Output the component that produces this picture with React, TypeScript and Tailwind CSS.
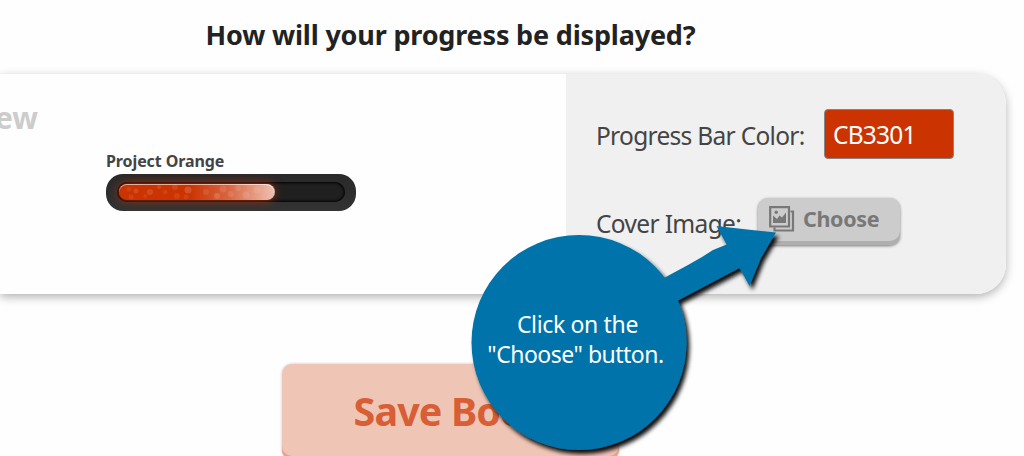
import React from 'react';

const PROGRESS = 69;

const BOKEH: { x: number; y: number; r: number; o: number }[] = [
  { x: 10, y: 5, r: 2.5, o: 0.07 },
  { x: 17, y: 7, r: 2.5, o: 0.12 },
  { x: 12, y: 13, r: 2.5, o: 0.08 },
  { x: 31, y: 8, r: 3, o: 0.12 },
  { x: 26, y: 12, r: 2, o: 0.08 },
  { x: 40, y: 3, r: 2, o: 0.12 },
  { x: 46, y: 8, r: 2.5, o: 0.07 },
  { x: 56, y: 3, r: 3, o: 0.1 },
  { x: 58, y: 12, r: 3, o: 0.08 },
  { x: 69, y: 6, r: 3.5, o: 0.16 },
  { x: 67, y: 13, r: 2.5, o: 0.08 },
  { x: 87, y: 8, r: 3, o: 0.09 },
  { x: 98, y: 12, r: 3, o: 0.14 },
  { x: 104, y: 5, r: 3.5, o: 0.1 },
  { x: 112, y: 10, r: 3, o: 0.1 },
  { x: 119, y: 4, r: 3, o: 0.09 },
  { x: 127, y: 11, r: 3.5, o: 0.1 },
  { x: 138, y: 6, r: 3.5, o: 0.09 },
];

const GalleryIcon: React.FC = () => (
  <svg width="26" height="26" viewBox="0 0 26 26" fill="none" className="shrink-0">
    <path d="M1.200 1.200h18.800v19.300h-18.800z" stroke="#787878" strokeWidth="2.200" />
    <path d="M21.500 5.500h2.500v19h-18.500v-3" stroke="#787878" strokeWidth="2.200" />
    <circle cx="7.200" cy="6.300" r="1.700" fill="#787878" />
    <path d="M4 9.500l4 3.500 2.500-3.500 2.500 2 4-5v10.500h-13z" fill="#787878" />
  </svg>
);

const ProgressBar: React.FC<{ title: string; percent: number }> = ({ title, percent }) => (
  <div className="w-[250px]">
    <p className="h-[25px] text-[16px] leading-[24px] font-bold tracking-[-0.1px] text-[#444]">{title}</p>
    <div className="h-[37px] rounded-[17px] bg-linear-to-b from-[#292929] to-[#333] px-[11px] py-[8px]">
      <div className="h-[20px] rounded-full bg-[#202020] p-[2px] shadow-[inset_0_0_3px_1px_#000]">
        <div
          className="relative h-[16px] overflow-visible rounded-full bg-[#cb3301] shadow-[0_0_10px_1px_#cb3301b0]"
          style={{ width: `${percent}%` }}
        >
          <svg width="156" height="16" viewBox="0 0 156 16" className="block rounded-full">
            <defs>
              <linearGradient id="shine">
                <stop offset="0.45" stopColor="#fff" stopOpacity="0" />
                <stop offset="0.7" stopColor="#fff" stopOpacity="0.25" />
                <stop offset="1" stopColor="#fff" stopOpacity="0.7" />
              </linearGradient>
            </defs>
            <rect width="156" height="16" fill="url(#shine)" />
            {BOKEH.map((dot) => (
              <circle key={`${dot.x}-${dot.y}`} cx={dot.x} cy={dot.y} r={dot.r} fill="#fff" fillOpacity={dot.o} />
            ))}
          </svg>
          <div className="absolute inset-0 rounded-full shadow-[inset_0_1px_0.5px_rgba(255,255,255,0.6)]" />
        </div>
      </div>
    </div>
  </div>
);

const Callout: React.FC = () => (
  <div className="absolute top-[215px] left-[462px] h-[241px] w-[330px]">
    <svg width="330" height="241" viewBox="0 0 330 241" className="block">
      <defs>
        <filter id="drop" x="-10%" y="-10%" width="120%" height="120%">
          <feDropShadow dx="3" dy="4" stdDeviation="2" floodColor="#000" floodOpacity="0.95" />
        </filter>
      </defs>
      <g fill="#0073aa" filter="url(#drop)">
        <circle cx="117" cy="127.500" r="107.500" />
        <path d="M201 63.500L226 50 240 42 251 35 264.700 29.500 260 21 254.500 11 285 14.500 314 17.500 299 43 287.500 71 282 61 277.500 53 250 67.500 217 85 204 93z" />
      </g>
    </svg>
    <p className="absolute top-[94px] left-[8px] w-[214px] text-center text-[23px] leading-[30px] tracking-[-0.35px] text-white">
      <span className="pl-[1px]">Click on the</span>
      <br />
      <span className="pr-[3px] tracking-[-0.5px]">"Choose" button.</span>
    </p>
  </div>
);

const App: React.FC = () => (
  <div className="relative h-[456px] w-[1024px] overflow-hidden bg-[#fefefe] font-['Noto_Sans','Open_Sans',sans-serif]">
    <h2 className="w-[901px] pt-[15px] text-center text-[27px] leading-[40px] font-bold tracking-[-0.18px] text-[#222]">
      How will your progress be displayed?
    </h2>

    <section className="mt-[19px] flex h-[220px] w-[1006px] overflow-visible rounded-r-[30px] bg-[#fefefe] shadow-[0_3px_10px_rgba(0,0,0,0.3)]">
      <div className="flex w-[566px]">
        <h3 className="flex w-[38px] shrink-0 justify-end pt-[24px] text-[30px] leading-[40px] font-bold text-[#ccc]">
          Preview
        </h3>
        <div className="pt-[75px] pl-[68px]">
          <ProgressBar title="Project Orange" percent={PROGRESS} />
        </div>
      </div>

      <div className="w-[440px] rounded-r-[30px] bg-[#f0f0f0] pt-[35px] pl-[30px] text-[24.5px] text-[#444]">
        <div className="flex h-[50px] items-center">
          <span className="w-[228px] pt-[5px] tracking-[-0.7px] whitespace-nowrap">Progress Bar Color:</span>
          <input
            readOnly
            value="CB3301"
            className="h-[50px] w-[130px] rounded-[4px] border border-[#858585] bg-[#cb3301] px-[8px] pt-[1px] tracking-[-0.8px] text-white outline-none"
          />
        </div>
        <div className="mt-[39px] flex h-[47px] items-start">
          <span className="w-[162px] pt-[6px] leading-[40px] tracking-[-0.65px] whitespace-nowrap">Cover Image:</span>
          <button className="flex h-[47px] w-[142px] gap-[8px] rounded-[10px] bg-[#ccc] pt-[8px] pl-[11px] text-[21.5px] leading-[26px] font-bold tracking-[-0.35px] text-[#787878] shadow-[inset_0_-4px_0_#afafaf,0_1px_3px_rgba(0,0,0,0.5)]">
            <GalleryIcon />
            Choose
          </button>
        </div>
      </div>
    </section>

    <button className="mt-[70px] ml-[282px] block h-[96px] w-[337px] rounded-[10px] bg-[#efc5b6] text-[39.5px] font-bold tracking-[-0.9px] text-[#d85e35] shadow-[inset_0_-4px_0_#e8a28a,0_0_3px_rgba(0,0,0,0.25)]">
      Save Book
    </button>

    <Callout />
  </div>
);

export default App;
